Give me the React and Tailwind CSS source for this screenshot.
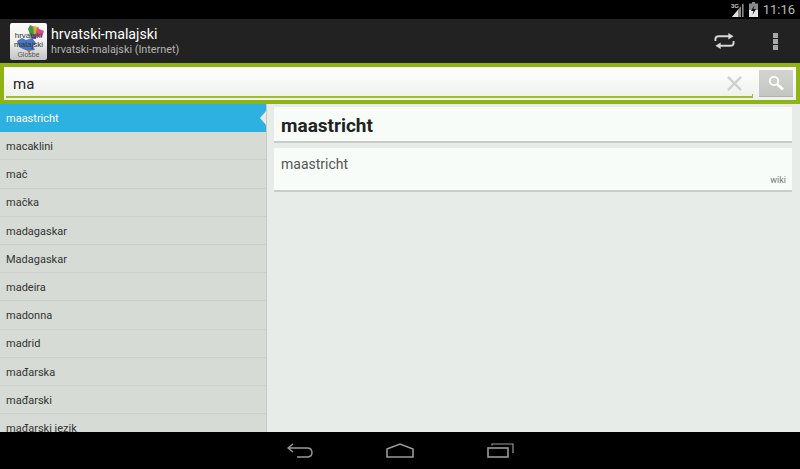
import React from 'react';

const words = [
  'maastricht',
  'macaklini',
  'mač',
  'mačka',
  'madagaskar',
  'Madagaskar',
  'madeira',
  'madonna',
  'madrid',
  'mađarska',
  'mađarski',
  'mađarski jezik',
];

// Status bar icons
const SignalIcon = () => (
  <svg width="13" height="16" viewBox="0 0 13 16" className="block">
    <text x="0" y="6" fontSize="6" fontWeight="700" fill="#c8c8c8" fontFamily="Liberation Sans, sans-serif">3G</text>
    <path d="M1 15 L10 15 L10 4 Z" fill="#8a8a8a" />
    <path d="M1 15 L7 15 L7 8 Z" fill="#e0e0e0" />
    <rect x="11" y="2" width="1.6" height="13" fill="#8a8a8a" />
  </svg>
);

const BatteryIcon = () => (
  <svg width="9" height="15" viewBox="0 0 9 15" className="block">
    <rect x="3" y="0" width="3" height="2" fill="#8a8a8a" />
    <rect x="0" y="1.5" width="9" height="13.5" fill="#8a8a8a" />
    <rect x="0" y="8" width="9" height="7" fill="#e6e6e6" />
    <path d="M5.5 3 L2 9 L4.5 9 L3.5 13 L7 7 L4.5 7 Z" fill="#111" />
  </svg>
);

const RepeatIcon = () => (
  <svg width="21" height="18" viewBox="0 0 22 18" fill="none" stroke="#d6d6d6" strokeWidth="2" className="block">
    <path d="M1.5 9 V7 Q1.5 4 5 4 H16" />
    <path d="M20.5 9 V11 Q20.5 14 17 14 H6" />
    <path d="M15 0.5 L20.5 4 L15 7.5 Z" fill="#d6d6d6" stroke="none" />
    <path d="M7 10.5 L1.5 14 L7 17.5 Z" fill="#d6d6d6" stroke="none" />
  </svg>
);

const ClearIcon = () => (
  <svg width="15" height="15" viewBox="0 0 16 16" stroke="#cfd1cf" strokeWidth="2.6" className="block">
    <path d="M1 1 L15 15 M15 1 L1 15" />
  </svg>
);

const SearchIcon = () => (
  <svg width="16" height="16" viewBox="0 0 16 16" fill="none" stroke="#ffffff" className="block">
    <circle cx="6" cy="6" r="4.2" strokeWidth="1.8" />
    <path d="M9.5 9.5 L15 14.5" strokeWidth="2.6" />
  </svg>
);

const AppLogo = () => (
  <div className="relative w-[37px] h-[37px] rounded-[2px] bg-gradient-to-b from-[#fafafa] via-[#f0f0f0] to-[#c4c4c4] overflow-hidden shrink-0 font-['Liberation_Sans',sans-serif]">
    <svg width="37" height="37" viewBox="0 0 37 37" className="absolute left-0 top-0">
      <path d="M18 6 L20 2 L24 4 L25 12 L21 15 Z" fill="#3f9a45" />
      <path d="M23 3 L29 4 L28 11 L24 12 Z" fill="#e2a92c" />
      <path d="M27 5 L34 8 L32 14 L25 13 Z" fill="#d14f86" />
      <path d="M21 12 L27 12 L26 16 L22 16 Z" fill="#7b4fb0" />
      <path d="M7 18 L12 15 L16 17 L22 15 L26 20 L23 23 L25 27 L18 28 L13 26 L9 24 Z" fill="#2b62b8" fillOpacity="0.85" />
      <path d="M17 27 L21 27 L19 31 Z" fill="#c7783a" />
    </svg>
    <div className="absolute left-0 right-0 top-[8px] text-center text-[8px] leading-[9px] text-[#333]">hrvatski<br />malajski</div>
    <div className="absolute left-0 right-0 bottom-[1px] text-center text-[7px] leading-[8px] text-[#555]">Glosbe</div>
  </div>
);

const ListRow = ({ word, active }) => (
  <div
    className={
      active
        ? 'relative h-[28.2px] shrink-0 flex items-center pl-[6px] pt-[3px] bg-[#2db1e1] text-[11px] text-white'
        : 'h-[28.2px] shrink-0 flex items-center pl-[6px] pt-[3px] border-b border-[#cdd1cd] text-[11px] text-[#333]'
    }
  >
    {word}
    {active && (
      <div className="absolute right-0 top-[7px] w-0 h-0 border-y-[7px] border-y-transparent border-r-[6px] border-r-[#e8ece8]" />
    )}
  </div>
);

export default function App() {
  return (
    <div className="w-[800px] h-[469px] flex flex-col overflow-hidden bg-black font-['Roboto',sans-serif]">
      {/* Status bar */}
      <div className="h-[19px] shrink-0 bg-black flex items-center justify-end pr-[5px]">
        <SignalIcon />
        <div className="ml-[5px] mr-[5px]">
          <BatteryIcon />
        </div>
        <span className="text-[13px] text-[#bcbcbc]">11:16</span>
      </div>

      {/* Action bar */}
      <div className="h-[44px] shrink-0 bg-[#222222] flex items-center pl-[10px]">
        <AppLogo />
        <div className="ml-[4px] flex flex-col">
          <span className="text-[14.2px] leading-[17px] text-white">hrvatski-malajski</span>
          <span className="text-[10.8px] leading-[13px] text-[#b4b4b4]">hrvatski-malajski (Internet)</span>
        </div>
        <div className="ml-auto mr-[38px]">
          <RepeatIcon />
        </div>
        <div className="mr-[22px] flex flex-col gap-[1px]">
          <div className="w-[5px] h-[5px] bg-[#a8a8a8]" />
          <div className="w-[5px] h-[5px] bg-[#a8a8a8]" />
          <div className="w-[5px] h-[5px] bg-[#a8a8a8]" />
        </div>
      </div>

      {/* Search bar */}
      <div className="h-[41px] shrink-0 bg-[#8fb313] p-[4px]">
        <div className="h-full bg-gradient-to-b from-white to-[#eef0ec] flex items-center pl-[2px] pr-[3px] gap-[6px]">
          <div className="relative flex-1 h-full flex items-center pl-[7px] pt-[1px]">
            <span className="text-[15px] text-[#222]">ma</span>
            <div className="absolute left-0 right-0 bottom-[2px] h-[2px] bg-[#9dbd26]" />
            <div className="absolute right-0 bottom-[2px] w-[1px] h-[4px] bg-[#9dbd26]" />
            <div className="absolute right-[11px] top-[9px]">
              <ClearIcon />
            </div>
          </div>
          <div className="w-[34px] h-[27px] bg-gradient-to-b from-[#d2d4d0] to-[#c4c6c2] border-b border-[#b0b2ae] flex items-center justify-center">
            <SearchIcon />
          </div>
        </div>
      </div>

      {/* Main */}
      <div className="flex-1 min-h-0 flex">
        <div className="w-[267px] shrink-0 flex flex-col overflow-hidden bg-[#d6dbd6] border-r border-[#c6cac6]">
          {words.map((word, i) => (
            <ListRow key={word} word={word} active={i === 0} />
          ))}
        </div>
        <div className="flex-1 bg-[#e8ece8] pl-[7px] pr-[8px] pt-[3px] flex flex-col gap-[5px]">
          <div className="h-[36px] bg-[#f8fcf8] border-b-2 border-[#c9cdc9] flex items-center pl-[7px] pt-[5px]">
            <span className="text-[19px] font-bold text-[#222]">maastricht</span>
          </div>
          <div className="relative h-[44px] bg-[#f8fcf8] border-b-2 border-[#c9cdc9] pl-[7px] pt-[7px] rounded-[1px]">
            <span className="block text-[14px] leading-[19px] text-[#555]">maastricht</span>
            <span className="absolute right-[6px] bottom-[5px] text-[9px] leading-[10px] text-[#777]">wiki</span>
          </div>
        </div>
      </div>

      {/* Navigation bar */}
      <div className="h-[37px] shrink-0 bg-black flex items-center justify-center gap-[73px] pl-[1px]">
        <svg width="26" height="15" viewBox="0 0 26 15" fill="none" stroke="#9a9a9a" strokeWidth="1.4" className="block">
          <path d="M6 1 L1 5 L6 9" />
          <path d="M1 5 H20 Q25 5 25 9.5 Q25 14 20 14 H10" />
        </svg>
        <svg width="28" height="15" viewBox="0 0 28 15" fill="none" stroke="#9a9a9a" strokeWidth="1.6" className="block">
          <path d="M1 6 L14 1 L27 6 V14 H1 Z" />
        </svg>
        <svg width="27" height="15" viewBox="0 0 27 15" fill="none" stroke="#9a9a9a" className="block">
          <rect x="1" y="5" width="20" height="9" strokeWidth="1.6" />
          <path d="M5 2.5 V1 H26 V10" strokeWidth="1.2" />
        </svg>
      </div>
    </div>
  );
}
